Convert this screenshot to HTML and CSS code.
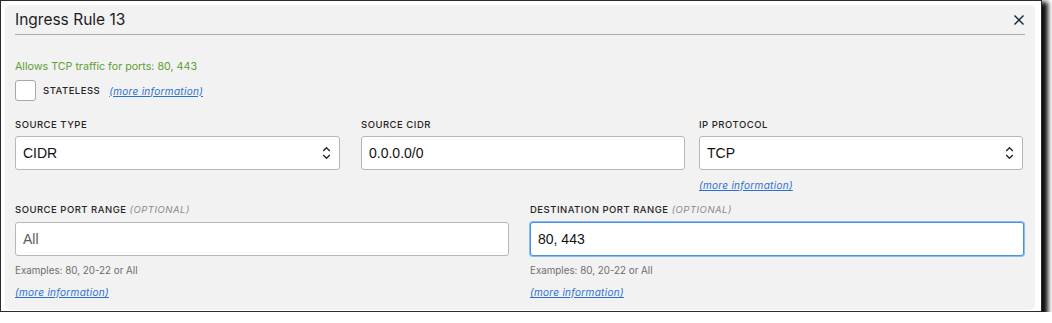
FILE: index.html
```html
<!DOCTYPE html>
<html lang="en">
<head>
  <meta charset="UTF-8">
  <title>Ingress Rule 13</title>
  <link rel="stylesheet" href="styles.css">
</head>
<body>
  <div class="frame">
    <div class="panel">
      <div class="panel-header">
        <h2 class="panel-title">Ingress Rule 13</h2>
        <svg class="close" width="12" height="12" viewBox="0 0 12 12">
          <path d="M1.5 1.5 L10.5 10.5 M10.5 1.5 L1.5 10.5" stroke="#1c2b3a" stroke-width="1.5" fill="none"/>
        </svg>
      </div>

      <p class="summary">Allows TCP traffic for ports: 80, 443</p>

      <div class="check-row">
        <span class="checkbox"></span>
        <span class="label">STATELESS</span>
        <a href="#" class="more">(more information)</a>
      </div>

      <div class="row row-3">
        <div class="field">
          <label class="label">SOURCE TYPE</label>
          <div class="control select w-325">
            <span>CIDR</span>
            <svg width="9" height="14" viewBox="0 0 9 14">
              <path d="M1.2 5 L4.5 1.7 L7.8 5 M1.2 9 L4.5 12.3 L7.8 9" stroke="#222" stroke-width="1.3" fill="none"/>
            </svg>
          </div>
        </div>
        <div class="field">
          <label class="label">SOURCE CIDR</label>
          <input class="control w-324" type="text" value="0.0.0.0/0">
        </div>
        <div class="field">
          <label class="label">IP PROTOCOL</label>
          <div class="control select w-324">
            <span>TCP</span>
            <svg width="9" height="14" viewBox="0 0 9 14">
              <path d="M1.2 5 L4.5 1.7 L7.8 5 M1.2 9 L4.5 12.3 L7.8 9" stroke="#222" stroke-width="1.3" fill="none"/>
            </svg>
          </div>
          <a href="#" class="more">(more information)</a>
        </div>
      </div>

      <div class="row row-2">
        <div class="field">
          <label class="label">SOURCE PORT RANGE <em class="optional">(OPTIONAL)</em></label>
          <input class="control" type="text" placeholder="All">
          <p class="hint">Examples: 80, 20-22 or All</p>
          <a href="#" class="more">(more information)</a>
        </div>
        <div class="field">
          <label class="label">DESTINATION PORT RANGE <em class="optional">(OPTIONAL)</em></label>
          <input class="control focused" type="text" value="80, 443">
          <p class="hint">Examples: 80, 20-22 or All</p>
          <a href="#" class="more">(more information)</a>
        </div>
      </div>
    </div>
  </div>
</body>
</html>
```

FILE: styles.css
```css
body {
  margin: 0;
  background: #fff;
  font-family: Inter, 'Liberation Sans', sans-serif;
  color: #222;
}

.frame {
  width: 1042px;
  height: 312px;
  box-sizing: border-box;
  border: 1px solid #2b2b2b;
  padding: 4px 6px 1px 4px;
  background: #fff;
  box-shadow: 4px 4px 5px 2px rgba(0, 0, 0, 0.95);
}

.panel {
  height: 100%;
  box-sizing: border-box;
  padding: 0 10px;
  background: #f2f2f2;
  border-radius: 5px;
}

.panel-header {
  display: flex;
  align-items: center;
  justify-content: space-between;
  height: 29px;
  border-bottom: 1px solid #ababab;
}

.panel-title {
  margin: 0;
  font-size: 15.5px;
  font-weight: 400;
  color: #1d1d1d;
}

.summary {
  margin: 25px 0 0;
  font-size: 10.7px;
  line-height: 13px;
  color: #5e9f34;
}

.check-row {
  display: flex;
  align-items: center;
  gap: 7px;
  margin-top: 7px;
}

.checkbox {
  width: 19px;
  height: 19px;
  border: 1px solid #a8a8a8;
  border-radius: 3px;
  background: #fff;
}

.label {
  font-size: 9.5px;
  font-weight: 500;
  letter-spacing: 0.5px;
  color: #262626;
}

.check-row .label {
  margin-right: 2px;
}

.more {
  font-size: 10px;
  font-style: italic;
  letter-spacing: 0.3px;
  color: #2c6fd1;
  text-decoration: underline;
}

.row {
  display: grid;
}

.row-3 {
  grid-template-columns: 346px 338px 1fr;
  margin-top: 18px;
}

.row-3 .label {
  margin-bottom: 5px;
}

.row-2 {
  grid-template-columns: 494px 494px;
  column-gap: 21px;
  margin-top: 13px;
}

.field {
  display: flex;
  flex-direction: column;
  align-items: flex-start;
}

.field .label {
  line-height: 12px;
}

.row-2 .label {
  margin-bottom: 6px;
}

.optional {
  font-weight: 400;
  color: #8a8a8a;
}

.control {
  width: 100%;
  height: 34px;
  box-sizing: border-box;
  margin: 0;
  padding: 0 7px;
  border: 1px solid #b4b7bd;
  border-radius: 3px;
  background: #fff;
  font-family: 'Liberation Sans', Inter, sans-serif;
  font-size: 14px;
  color: #111;
  outline: none;
}

.w-325 {
  width: 325px;
}

.w-324 {
  width: 324px;
}

.control::placeholder {
  color: #5a5a5a;
}

.select {
  display: flex;
  align-items: center;
  justify-content: space-between;
  padding-right: 8px;
}

.focused {
  border: 1px solid #4a90e2;
  box-shadow: 0 0 0 1px #8cbbef;
}

.hint {
  margin: 9px 0 0;
  font-size: 9.8px;
  line-height: 12px;
  color: #6e6e6e;
}

.field .more {
  line-height: 12px;
  margin-top: 9px;
}
```
